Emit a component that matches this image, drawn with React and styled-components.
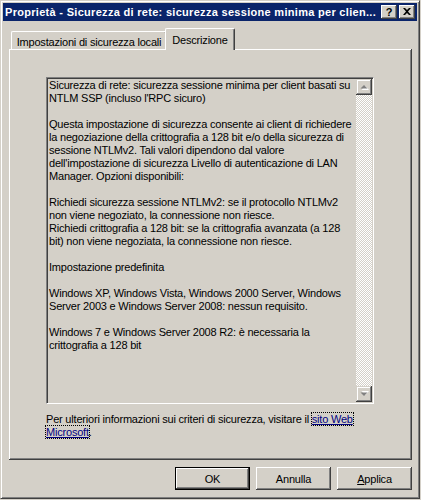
import React from 'react';
import styled, { createGlobalStyle, css } from 'styled-components';

const GlobalStyle = createGlobalStyle`
  html, body {
    margin: 0;
    padding: 0;
    background: #d4d0c8;
  }
  body {
    font-family: "Liberation Sans", Arial, sans-serif;
    font-size: 11px;
    letter-spacing: -0.2px;
    color: #000;
  }
`;

const Window = styled.div`
  box-sizing: border-box;
  width: 420px;
  height: 499px;
  padding: 2px;
  background: #d4d0c8;
  border: 1px solid;
  border-color: #d4d0c8 #404040 #404040 #d4d0c8;
  box-shadow: inset 1px 1px #fff, inset -1px -1px #808080;
  display: flex;
  flex-direction: column;
`;

const TitleBar = styled.div`
  height: 18px;
  background: #0a246a;
  display: flex;
  align-items: center;
  padding: 0 2px;
  gap: 2px;
`;

const Title = styled.div`
  flex: 1;
  color: #fff;
  font-weight: bold;
  font-size: 11px;
  letter-spacing: 0.3px;
  white-space: nowrap;
  overflow: hidden;
`;

const raised = css`
  box-shadow: inset -1px -1px #404040, inset 1px 1px #fff, inset -2px -2px #808080;
`;

const CaptionButton = styled.div`
  box-sizing: border-box;
  width: 16px;
  height: 14px;
  background: #d4d0c8;
  ${raised};
  display: flex;
  align-items: center;
  justify-content: center;
  font-weight: bold;
  font-size: 11px;
  letter-spacing: 0;
  line-height: 14px;
  padding-bottom: 1px;
`;

const Body = styled.div`
  flex: 1;
  display: flex;
  flex-direction: column;
  padding: 7px 5px 0 6px;
`;

const TabRow = styled.div`
  display: flex;
  align-items: flex-end;
  height: 21px;
  padding-left: 2px;
`;

const Tab = styled.div`
  box-sizing: border-box;
  position: relative;
  width: ${p => p.$width}px;
  height: ${p => (p.$active ? 22 : 18)}px;
  margin-bottom: ${p => (p.$active ? -1 : 0)}px;
  margin-right: ${p => (p.$active ? 0 : -2)}px;
  z-index: ${p => (p.$active ? 2 : 1)};
  background: #d4d0c8;
  border-top: 1px solid #fff;
  border-left: 1px solid #fff;
  border-right: 1px solid #404040;
  border-radius: 2px 2px 0 0;
  box-shadow: inset -1px 0 #808080;
  text-align: center;
  white-space: nowrap;
  line-height: 13px;
  padding-top: ${p => (p.$active ? 5 : 4)}px;
`;

const Panel = styled.div`
  box-sizing: border-box;
  width: 403px;
  height: 411px;
  background: #d4d0c8;
  ${raised};
  padding: 28px 0 0 37px;
  display: flex;
  flex-direction: column;
`;

const TextBox = styled.div`
  box-sizing: border-box;
  width: 328px;
  height: 327px;
  border: 1px solid;
  border-color: #808080 #fff #fff #808080;
  box-shadow: inset 1px 1px #404040, inset -1px -1px #d4d0c8;
  padding: 1px;
  display: flex;
`;

const TextArea = styled.div`
  flex: 1;
  padding: 0 0 0 1px;
`;

const Line = styled.div`
  height: 13px;
  line-height: 13px;
  white-space: pre;
`;

const ScrollBar = styled.div`
  width: 16px;
  display: flex;
  flex-direction: column;
`;

const ScrollButton = styled.div`
  box-sizing: border-box;
  width: 16px;
  height: 16px;
  background: #d4d0c8;
  box-shadow: inset -1px -1px #404040, inset 1px 1px #d4d0c8, inset -2px -2px #808080, inset 2px 2px #fff;
  display: flex;
  align-items: center;
  justify-content: center;
`;

const Track = styled.div`
  flex: 1;
  background-image: conic-gradient(#fff 25%, #d4d0c8 0 50%, #fff 0 75%, #d4d0c8 0);
  background-size: 2px 2px;
`;

const Info = styled.div`
  margin-top: 9px;
  line-height: 13px;
  white-space: nowrap;
`;

const Link = styled.span`
  color: #000080;
  text-decoration: underline;
  outline: 1px dotted #000;
  outline-offset: 0;
`;

const ButtonRow = styled.div`
  display: flex;
  justify-content: flex-end;
  gap: 6px;
  margin-top: 7px;
`;

const Button = styled.div`
  box-sizing: border-box;
  width: 75px;
  height: 23px;
  background: #d4d0c8;
  display: flex;
  align-items: center;
  justify-content: center;
  ${raised};
  ${p =>
    p.$default &&
    css`
      border: 1px solid #000;
    `}
`;

const Arrow = ({ down }) => (
  <svg width="9" height="6" viewBox="0 0 9 6">
    <g transform={down ? 'translate(0 6) scale(1 -1)' : undefined}>
      <path d="M1.5 5 L5.5 1 L9 5 Z" fill="#fff" transform="translate(0 1)" />
      <path d="M0.5 4.5 L4 1 L7.5 4.5 Z" fill="#808080" />
    </g>
  </svg>
);

const CloseGlyph = () => (
  <svg width="8" height="7" viewBox="0 0 8 7">
    <path d="M0 0h2l2 2 2-2h2L5 3.5 8 7H6L4 5 2 7H0l3-3.5z" fill="#000" />
  </svg>
);

const lines = [
  'Sicurezza di rete: sicurezza sessione minima per client basati su',
  "NTLM SSP (incluso l'RPC sicuro)",
  '',
  'Questa impostazione di sicurezza consente ai client di richiedere',
  'la negoziazione della crittografia a 128 bit e/o della sicurezza di',
  'sessione NTLMv2. Tali valori dipendono dal valore',
  "dell'impostazione di sicurezza Livello di autenticazione di LAN",
  'Manager. Opzioni disponibili:',
  '',
  'Richiedi sicurezza sessione NTLMv2: se il protocollo NTLMv2',
  'non viene negoziato, la connessione non riesce.',
  'Richiedi crittografia a 128 bit: se la crittografia avanzata (a 128',
  'bit) non viene negoziata, la connessione non riesce.',
  '',
  'Impostazione predefinita',
  '',
  'Windows XP, Windows Vista, Windows 2000 Server, Windows',
  'Server 2003 e Windows Server 2008: nessun requisito.',
  '',
  'Windows 7 e Windows Server 2008 R2: è necessaria la',
  'crittografia a 128 bit',
];

export default function App() {
  return (
    <>
      <GlobalStyle />
      <Window>
        <TitleBar>
          <Title>Proprietà - Sicurezza di rete: sicurezza sessione minima per clien...</Title>
          <CaptionButton>?</CaptionButton>
          <CaptionButton>
            <CloseGlyph />
          </CaptionButton>
        </TitleBar>
        <Body>
          <TabRow>
            <Tab $width={156}>Impostazioni di sicurezza locali</Tab>
            <Tab $width={70} $active>
              Descrizione
            </Tab>
          </TabRow>
          <Panel>
            <TextBox>
              <TextArea>
                {lines.map((l, i) => (
                  <Line key={i}>{l}</Line>
                ))}
              </TextArea>
              <ScrollBar>
                <ScrollButton>
                  <Arrow />
                </ScrollButton>
                <Track />
                <ScrollButton>
                  <Arrow down />
                </ScrollButton>
              </ScrollBar>
            </TextBox>
            <Info>
              Per ulteriori informazioni sui criteri di sicurezza, visitare il <Link>sito Web</Link>
              <br />
              <Link>Microsoft</Link>.
            </Info>
          </Panel>
          <ButtonRow>
            <Button $default>OK</Button>
            <Button>Annulla</Button>
            <Button>
              <span>
                <u>A</u>pplica
              </span>
            </Button>
          </ButtonRow>
        </Body>
      </Window>
    </>
  );
}
